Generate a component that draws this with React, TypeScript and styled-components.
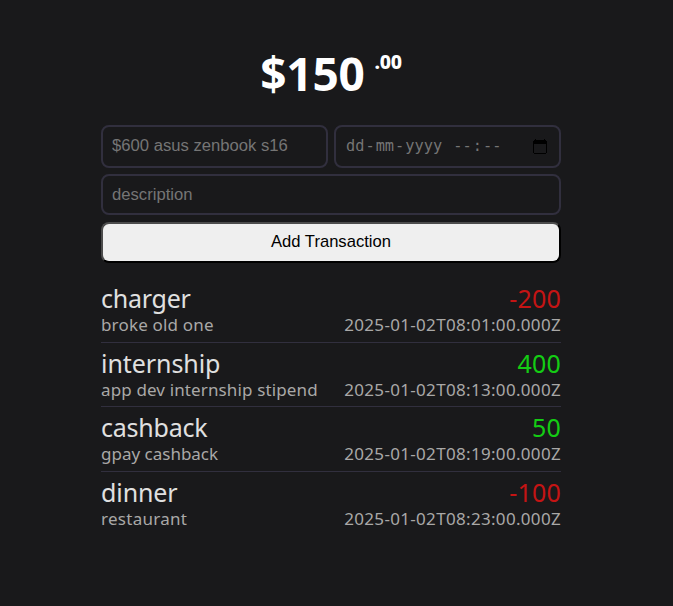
import React from 'react';
import styled, { createGlobalStyle } from 'styled-components';

const GlobalStyle = createGlobalStyle`
  * { box-sizing: border-box; }
  body {
    margin: 0;
    background: #19191b;
    color: #e0e0e0;
    font-family: "Noto Sans", sans-serif;
  }
`;

const Page = styled.main`
  width: 460px;
  margin-left: 101px;
  padding-top: 42px;
  height: 606px;
`;

const Balance = styled.h1`
  display: flex;
  justify-content: center;
  align-items: flex-start;
  gap: 10px;
  margin: 0;
  height: 83px;
  color: #fff;
  font-size: 46px;
  line-height: 63px;
  font-weight: 700;
  letter-spacing: -0.3px;
`;

const Cents = styled.span`
  font-size: 19.5px;
  line-height: 40px;
  font-weight: 800;
`;

const Form = styled.form`
  display: flex;
  flex-direction: column;
`;

const Basic = styled.div`
  display: grid;
  grid-template-columns: 1fr 1fr;
  gap: 6px;
  height: 43px;
  margin-bottom: 6px;
`;

const Field = styled.input`
  min-width: 0;
  padding: 0 9px 2px;
  background: transparent;
  border: 2px solid #312f3e;
  border-radius: 8px;
  color: #fff;
  font: 16.65px "Liberation Sans", Arial, sans-serif;
  outline: none;

  &::placeholder { color: #757575; }
`;

const Description = styled(Field)`
  height: 41px;
  margin-bottom: 7px;
  padding-bottom: 0;
`;

const DateField = styled.div`
  display: flex;
  align-items: center;
  padding: 0 12px 1px 9px;
  border: 2px solid #312f3e;
  border-radius: 8px;
  color: #757575;
  font: 15.3px "DejaVu Sans Mono", monospace;
  white-space: pre;

  svg { margin-left: auto; }
`;

const Part = styled.span`
  padding: 0 1px;
`;

const Submit = styled.button`
  height: 41px;
  padding: 0 0 2px;
  background: #efefef;
  border: 2px solid;
  border-color: #4c4c4c #000 #000 #4c4c4c;
  border-radius: 8px;
  color: #000;
  font: 16.6px "Liberation Sans", Arial, sans-serif;
`;

const List = styled.section`
  margin-top: 14px;
`;

const Transaction = styled.article`
  display: flex;
  justify-content: space-between;
  height: 64.5px;
  padding-top: 5px;

  & + & {
    border-top: 1px solid #312f3e;
    padding-top: 4px;
  }
`;

const Column = styled.div<{ $end?: boolean }>`
  display: flex;
  flex-direction: column;
  align-items: ${(p) => (p.$end ? 'flex-end' : 'flex-start')};
  white-space: nowrap;
`;

const Name = styled.div<{ $track: number }>`
  font-size: 25px;
  line-height: 32px;
  letter-spacing: ${(p) => p.$track}px;
`;

const Price = styled(Name)<{ $negative: boolean }>`
  color: ${(p) => (p.$negative ? '#c41414' : '#14cc14')};
`;

const Detail = styled.div<{ $track: number }>`
  margin-top: 1px;
  color: #a9a8a7;
  font-size: 17px;
  line-height: 20px;
  letter-spacing: ${(p) => p.$track}px;
`;

const transactions = [
  { name: 'charger', nameTrack: -0.25, detail: 'broke old one', detailTrack: 0.17, price: -200, date: '2025-01-02T08:01:00.000Z' },
  { name: 'internship', nameTrack: -0.07, detail: 'app dev internship stipend', detailTrack: 0.13, price: 400, date: '2025-01-02T08:13:00.000Z' },
  { name: 'cashback', nameTrack: -0.22, detail: 'gpay cashback', detailTrack: 0, price: 50, date: '2025-01-02T08:19:00.000Z' },
  { name: 'dinner', nameTrack: -0.1, detail: 'restaurant', detailTrack: 0.27, price: -100, date: '2025-01-02T08:23:00.000Z' },
];

function CalendarIcon() {
  return (
    <svg width="14" height="15" viewBox="0 0 14 15" shapeRendering="crispEdges">
      <path fill="#000" fillRule="evenodd" d="M2 0h1v1h8V0h1v1h1v1h1v12h-1v1H1v-1H0V2h1V1h1zM1 5v9h12V5z" />
    </svg>
  );
}

export default function App() {
  return (
    <>
      <GlobalStyle />
      <Page>
        <Balance>
          $150<Cents>.00</Cents>
        </Balance>
        <Form onSubmit={(e) => e.preventDefault()}>
          <Basic>
            <Field placeholder="$600 asus zenbook s16" />
            <DateField>
              <Part>dd</Part>-<Part>mm</Part>-<Part>yyyy</Part>{' '}<Part> --</Part>:<Part>--</Part>
              <CalendarIcon />
            </DateField>
          </Basic>
          <Description placeholder="description" />
          <Submit>Add Transaction</Submit>
        </Form>
        <List>
          {transactions.map((t) => (
            <Transaction key={t.name}>
              <Column>
                <Name $track={t.nameTrack}>{t.name}</Name>
                <Detail $track={t.detailTrack}>{t.detail}</Detail>
              </Column>
              <Column $end>
                <Price $track={0.2} $negative={t.price < 0}>{t.price}</Price>
                <Detail $track={0.32}>{t.date}</Detail>
              </Column>
            </Transaction>
          ))}
        </List>
      </Page>
    </>
  );
}
